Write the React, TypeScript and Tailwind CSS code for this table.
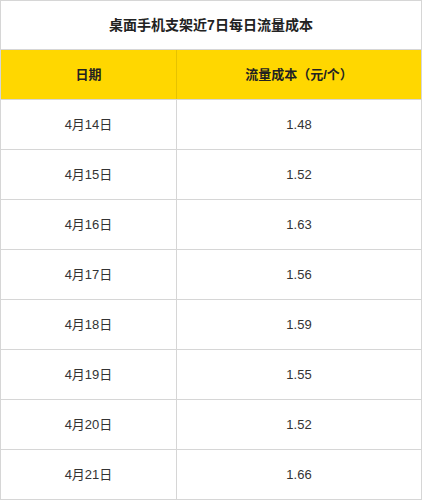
import React from "react";

const rows: [string, string][] = [
  ["4月14日", "1.48"],
  ["4月15日", "1.52"],
  ["4月16日", "1.63"],
  ["4月17日", "1.56"],
  ["4月18日", "1.59"],
  ["4月19日", "1.55"],
  ["4月20日", "1.52"],
  ["4月21日", "1.66"],
];

export default function App() {
  return (
    <div
      className="w-[422px] h-[500px] bg-white border-x border-b border-[#d6d6d6] text-[#333]"
      style={{ fontFamily: '"Liberation Sans", Arial, "Noto Sans CJK SC", sans-serif' }}
    >
      <div className="h-[49px] border-t border-[#d6d6d6] flex items-center justify-center text-[14px] font-bold text-[#222]">
        桌面手机支架近7日每日流量成本
      </div>
      <div className="h-[50px] border-t border-[#d6d6d6] bg-[#ffd700] flex text-[13px] font-bold text-[#222]">
        <div className="w-[176px] border-r border-[#e6c200] flex items-center justify-center">日期</div>
        <div className="flex-1 flex items-center justify-center">流量成本（元/个）</div>
      </div>
      {rows.map(([d, v]) => (
        <div key={d} className="h-[50px] border-t border-[#d6d6d6] flex text-[13px]">
          <div className="w-[176px] border-r border-[#d6d6d6] flex items-center justify-center">{d}</div>
          <div className="flex-1 flex items-center justify-center">{v}</div>
        </div>
      ))}
    </div>
  );
}
